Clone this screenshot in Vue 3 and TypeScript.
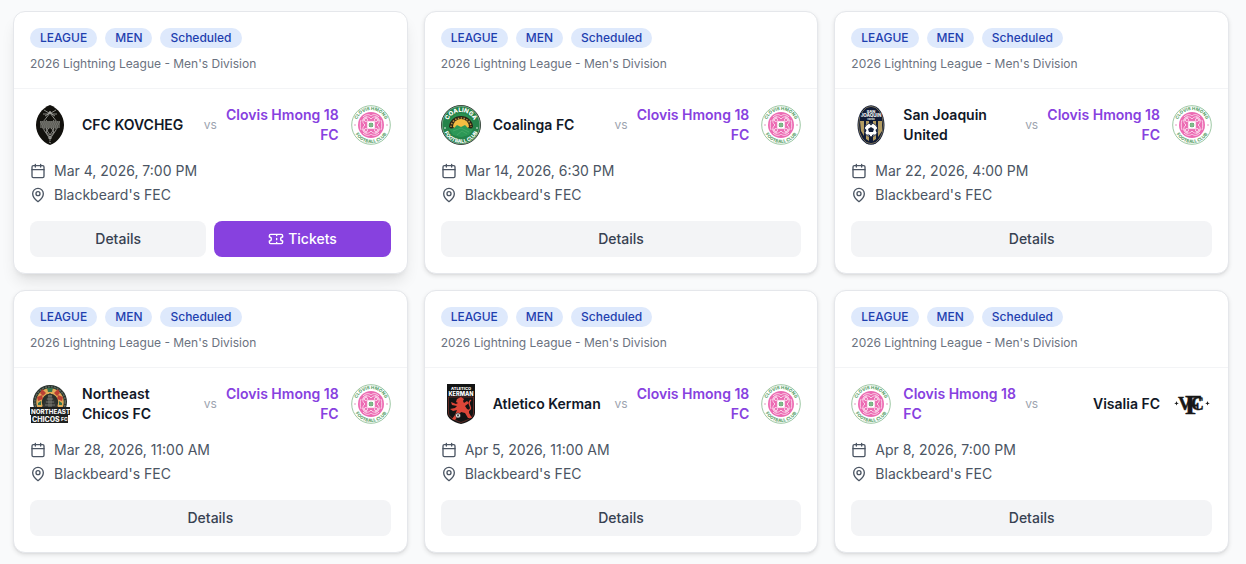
<script setup lang="ts">
type Crest = 'kovcheg' | 'clovis' | 'coalinga' | 'sanjoaquin' | 'northeast' | 'kerman' | 'visalia'

interface Team {
  name: string
  crest: Crest
  own?: boolean
}

interface Match {
  id: number
  home: Team
  away: Team
  date: string
  venue: string
  tickets?: boolean
}

const clovis: Team = { name: 'Clovis Hmong 18 FC', crest: 'clovis', own: true }
const venue = "Blackbeard's FEC"
const competition = "2026 Lightning League - Men's Division"
const tags: string[] = ['LEAGUE', 'MEN', 'Scheduled']

const matches: Match[] = [
  { id: 1, home: { name: 'CFC KOVCHEG', crest: 'kovcheg' }, away: clovis, date: 'Mar 4, 2026, 7:00 PM', venue, tickets: true },
  { id: 2, home: { name: 'Coalinga FC', crest: 'coalinga' }, away: clovis, date: 'Mar 14, 2026, 6:30 PM', venue },
  { id: 3, home: { name: 'San Joaquin United', crest: 'sanjoaquin' }, away: clovis, date: 'Mar 22, 2026, 4:00 PM', venue },
  { id: 4, home: { name: 'Northeast Chicos FC', crest: 'northeast' }, away: clovis, date: 'Mar 28, 2026, 11:00 AM', venue },
  { id: 5, home: { name: 'Atletico Kerman', crest: 'kerman' }, away: clovis, date: 'Apr 5, 2026, 11:00 AM', venue },
  { id: 6, home: clovis, away: { name: 'Visalia FC', crest: 'visalia' }, date: 'Apr 8, 2026, 7:00 PM', venue },
]
</script>

<template>
  <svg class="sprite" aria-hidden="true">
    <defs>
      <path id="arc-top" d="M5 20a15 15 0 0 1 30 0" />
      <path id="arc-top-inner" d="M6 21a14 14 0 0 1 28 0" />
      <path id="arc-bottom" d="M2 20a18 18 0 0 0 36 0" />
    </defs>

    <symbol id="crest-kovcheg" viewBox="0 0 40 40">
      <path d="M20 0C28 3 34 11 34 20S28 37 20 40C12 37 6 29 6 20S12 3 20 0Z" fill="#12110d" />
      <g fill="none" stroke="#a9a9a4" stroke-width=".8">
        <path d="M14 5l5 3 1-2 1 2 5-3M13 9h5l2-2 2 2h5M15 11l5-3 5 3" />
        <path d="M20 8l-7 9 1 8 6 9 6-9 1-8Z" />
        <path d="M16 15l8 12-4 5-4-5 8-12M16 24l4-5 4 5-4 6Z" />
        <path d="M20 31v5M18 33h4M19 37l2 1" />
      </g>
      <path d="M10 16h20v7H10z" fill="#55554f" />
      <path d="M10 17h20M11 19h18M12 21h16M12 23h16" stroke="#b4b4ae" stroke-width=".6" stroke-dasharray="1.4 .7" />
    </symbol>

    <symbol id="crest-clovis" viewBox="0 0 40 40">
      <circle cx="20" cy="20" r="19.3" fill="#fff" stroke="#83b98c" stroke-width=".8" />
      <circle cx="20" cy="20" r="13" fill="#ec6cb3" />
      <g fill="none" stroke="#fbdcee" stroke-width=".9">
        <path d="M12 16c0-4 5-6 8-2 3-4 8-2 8 2M12 24c0 4 5 6 8 2 3 4 8 2 8-2" />
        <path d="M16 12c-4 0-6 5-2 8-4 3-2 8 2 8M24 12c4 0 6 5 2 8 4 3 2 8-2 8" />
        <circle cx="15" cy="15" r="1.600" /><circle cx="25" cy="15" r="1.600" />
        <circle cx="15" cy="25" r="1.600" /><circle cx="25" cy="25" r="1.600" />
        <path d="M12 12c3-3 6-3 8-1 2-2 5-2 8 1M12 28c3 3 6 3 8 1 2 2 5 2 8-1M10 15c-1 3-1 7 0 10M30 15c1 3 1 7 0 10" />
      </g>
      <rect x="16" y="16" width="8" height="8" fill="#fff" stroke="#ed8fc4" stroke-width=".6" />
      <rect x="18" y="18" width="4" height="4" fill="#6cae7a" />
      <path d="M20 17v6M17 20h6" stroke="#9dc9a5" stroke-width=".6" />
      <circle cx="4" cy="20" r=".8" fill="#e58bbd" /><circle cx="36" cy="20" r=".8" fill="#e58bbd" />
      <g class="lettering" fill="#63a670" font-size="4" text-anchor="middle">
        <text font-size="4.500"><textPath href="#arc-top" startOffset="50%">CLOVIS HMONG</textPath></text>
        <text font-size="4.500"><textPath href="#arc-bottom" startOffset="50%">FOOTBALL CLUB</textPath></text>
      </g>
    </symbol>

    <symbol id="crest-coalinga" viewBox="0 0 40 40">
      <circle cx="20" cy="20" r="19.5" fill="#25834a" stroke="#323c34" />
      <circle cx="20" cy="20" r="18.8" fill="none" stroke="#dce6dc" stroke-width=".4" />
      <circle cx="20" cy="20" r="11.8" fill="#2a9251" />
      <path d="M8 22a12 11 0 1 1 24 0l-3 3-4-4H15l-4 4Z" fill="#292416" />
      <path d="M10 22a10 9 0 0 1 20 0" fill="none" stroke="#bd913f" stroke-width="1.500" stroke-dasharray="1.500 1.400" />
      <path d="M12 22a8 8 0 0 1 16 0l-3 2H15Z" fill="#f5bd42" />
      <path d="M8 24l5-1 3-3 4 2 4-2 3 3 5 1-4 6-8 2-8-2Z" fill="#2c9856" />
      <path d="M12 26l8-3 8 4M16 30l5-4 5 3" fill="none" stroke="#47aa68" stroke-width=".8" />
      <circle cx="4" cy="23" r=".8" fill="#fff" /><circle cx="36" cy="23" r=".8" fill="#fff" />
      <g class="lettering" fill="#fff" text-anchor="middle">
        <text font-size="6"><textPath href="#arc-top-inner" startOffset="50%">COALINGA</textPath></text>
        <text font-size="5"><textPath href="#arc-bottom" startOffset="50%">FOOTBALL CLUB</textPath></text>
      </g>
    </symbol>

    <symbol id="crest-sanjoaquin" viewBox="0 0 40 40">
      <ellipse cx="20" cy="20" rx="13.5" ry="19.8" fill="#101b36" />
      <ellipse cx="20" cy="20" rx="12.4" ry="18.7" fill="none" stroke="#9b8b60" stroke-width=".7" />
      <path d="M9 16h4v15l-3-5ZM15 16h3v20l-3-2ZM22 16h3v18l-3 2ZM27 16h4v10l-4 6Z" fill="#b39c62" />
      <path d="M9 8h22v8H9z" fill="#101b36" />
      <g class="lettering" fill="#f1f1ee" text-anchor="middle">
        <text x="20" y="7.500" font-size="4">SAN</text>
        <text x="20" y="12" font-size="4.500">JOAQUIN</text>
        <text x="20" y="15" font-size="2">UNITED</text>
      </g>
      <circle cx="20" cy="25" r="6.8" fill="#fff" stroke="#101b36" stroke-width=".8" />
      <path d="M20 22l3 2-1 3h-4l-1-3ZM18 18.5h4l-2 2ZM13.5 23l2 2-1 3-1-2ZM26.500 23l-2 2 1 3 1-2ZM16 29l3 1v2ZM24 29l-3 1v2Z" fill="#152039" />
    </symbol>

    <symbol id="crest-northeast" viewBox="0 0 40 40">
      <circle cx="20" cy="18" r="17" fill="#29302b" />
      <circle cx="20" cy="18" r="15.2" fill="none" stroke="#59695d" stroke-width="1.600" stroke-dasharray="2 1" />
      <circle cx="20" cy="18" r="11" fill="none" stroke="#e3ac58" stroke-width="5.500" />
      <path d="M7 13l5-2 1 4-5 2ZM12 5l4 4-3 3-3-3ZM28 5l-4 4 3 3 3-3ZM33 13l-5-2-1 4 5 2Z" fill="#bb4034" />
      <path d="M17 4h6l-1 4h-4ZM8 19l3-2v4H8ZM32 19l-3-2v4h3Z" fill="#34744e" />
      <path d="M20 9l2 2 2 4 4 8H12l4-8 2-4Z" fill="#343633" />
      <path d="M18 12h4M17 15h6M16 18h8M15 21h10M19 11v12M21 11v12" stroke="#85867d" stroke-width=".8" />
      <path d="M0 23h40v8h-2v8H1v-8H0Z" fill="#1e201f" />
      <g class="lettering" fill="#f5f5f3">
        <text x="1" y="30" font-size="6.200">NORTHEAST</text>
        <text x="2" y="38" font-size="7">CHICOS</text>
        <text x="31" y="37" font-size="5">FC</text>
      </g>
    </symbol>

    <symbol id="crest-kerman" viewBox="0 0 40 40">
      <path d="M6 0h28v29c0 5-6 9-14 11C12 38 6 34 6 29Z" fill="#121313" />
      <path d="M7.500 13h25v16c0 4-5 7-12.500 9.500C13 36 7.500 33 7.500 29Z" fill="none" stroke="#81332d" stroke-width=".7" />
      <g class="lettering" fill="#fff" text-anchor="middle">
        <text x="20" y="5.500" font-size="4">ATLETICO</text>
        <text x="20" y="11.500" font-size="5.600">KERMAN</text>
      </g>
      <path d="M16 15l4-2 3 2-1 2 1 2 3-2 2 2-4 3 2 3 2 1 0 3 3 5h-4l-3-5-4-1-3 4-3 4-3-1 3-4 2-5-4 1-3-2 5-1 2-2-5-1-1-3 5 2 2-1-2-1Z" fill="#dc4638" />
      <path d="M26 27q5-1 3-5t1-6" fill="none" stroke="#dc4638" stroke-width="1.300" />
      <circle cx="17" cy="31.500" r="2.500" fill="#e8e8e6" stroke="#181818" stroke-width=".6" />
      <path d="M17 30l1 1-.5 1.500h-1L16 31Z" fill="#333" />
    </symbol>

    <symbol id="crest-visalia" viewBox="0 0 40 40">
      <g class="monogram" fill="#171717" stroke="#171717" stroke-width=".4">
        <text x="6" y="26" font-size="19">V</text>
        <text x="19" y="26" font-size="18">C</text>
        <text x="13" y="30" font-size="28">F</text>
      </g>
      <path d="M4.500 17l.6 1.700 1.700.6-1.700.6-.6 1.700-.6-1.700-1.700-.6 1.700-.6ZM35.500 17l.6 1.700 1.700.6-1.700.6-.6 1.700-.6-1.700-1.700-.6 1.700-.6Z" fill="#171717" />
    </symbol>
  </svg>

  <main class="schedule">
    <article v-for="match in matches" :key="match.id" class="card" :class="{ raised: match.tickets }">
      <header class="card-head">
        <div class="tags">
          <span v-for="tag in tags" :key="tag" class="tag">{{ tag }}</span>
        </div>
        <p class="competition">{{ competition }}</p>
      </header>

      <div class="card-body">
        <div class="teams">
          <div class="team">
            <svg class="crest" role="img" :aria-label="match.home.name"><use :href="`#crest-${match.home.crest}`" /></svg>
            <span class="name" :class="{ own: match.home.own }">{{ match.home.name }}</span>
          </div>
          <span class="versus">vs</span>
          <div class="team away">
            <span class="name" :class="{ own: match.away.own }">{{ match.away.name }}</span>
            <svg class="crest" role="img" :aria-label="match.away.name"><use :href="`#crest-${match.away.crest}`" /></svg>
          </div>
        </div>

        <div class="facts">
          <div class="fact">
            <svg class="icon" viewBox="0 0 24 24" aria-hidden="true">
              <rect x="3" y="4" width="18" height="18" rx="2" />
              <path d="M16 2v4M8 2v4M3 10h18" />
            </svg>
            <span>{{ match.date }}</span>
          </div>
          <div class="fact">
            <svg class="icon" viewBox="0 0 24 24" aria-hidden="true">
              <path d="M20 10c0 6-8 12-8 12s-8-6-8-12a8 8 0 0 1 16 0Z" />
              <circle cx="12" cy="10" r="3" />
            </svg>
            <span>{{ match.venue }}</span>
          </div>
        </div>

        <div class="actions">
          <button type="button" class="button">Details</button>
          <button v-if="match.tickets" type="button" class="button primary">
            <svg class="icon" viewBox="0 0 24 24" aria-hidden="true">
              <path d="M2 9a3 3 0 0 1 0 6v2a2 2 0 0 0 2 2h16a2 2 0 0 0 2-2v-2a3 3 0 0 1 0-6V7a2 2 0 0 0-2-2H4a2 2 0 0 0-2 2ZM13 5v2M13 17v2M13 11v2" />
            </svg>
            Tickets
          </button>
        </div>
      </div>
    </article>
  </main>
</template>

<style>
body {
  background: #f9fafb;
}
</style>

<style scoped>
.sprite {
  display: none;
}
.lettering {
  font-family: Inter, sans-serif;
  font-weight: 800;
}
.monogram {
  font-family: "Liberation Serif", serif;
  font-weight: 700;
}
.schedule {
  display: grid;
  grid-template-columns: repeat(3, minmax(0, 1fr));
  gap: 16px;
  padding: 11px 17px 11px 13px;
  font-family: Inter, sans-serif;
  font-size: 14px;
  line-height: 20px;
  color: #4b5563;
}
.card {
  background: #fff;
  border: 1px solid #e5e7eb;
  border-radius: 12px;
  box-shadow: 0 2px 4px rgba(0, 0, 0, 0.1), 0 1px 2px -1px rgba(0, 0, 0, 0.1);
}
.card.raised {
  box-shadow: 0 10px 15px -3px rgba(0, 0, 0, 0.1), 0 4px 6px -4px rgba(0, 0, 0, 0.1);
}
.card-head {
  padding: 16px;
  border-bottom: 1px solid #f3f4f6;
}
.tags {
  display: flex;
  gap: 8px;
}
.tag {
  padding: 2px 10px;
  border-radius: 10px;
  background: #dee9fc;
  color: #1e40af;
  font-size: 12px;
  font-weight: 500;
  line-height: 16px;
}
.competition {
  margin: 8px 0 0;
  font-size: 12px;
  line-height: 16px;
  color: #6b7280;
}
.card-body {
  padding: 16px;
}
.teams {
  display: flex;
  align-items: center;
  gap: 8px;
}
.team {
  flex: 1;
  min-width: 0;
  display: flex;
  align-items: center;
  gap: 12px;
}
.away {
  justify-content: flex-end;
  text-align: right;
}
.crest {
  flex: none;
  width: 40px;
  height: 40px;
}
.name {
  font-weight: 600;
  color: #111827;
}
.name.own {
  color: #8741df;
}
.versus {
  font-size: 12px;
  line-height: 16px;
  color: #9ca3af;
}
.facts {
  display: grid;
  gap: 4px;
  margin: 16px 0;
}
.fact {
  display: flex;
  align-items: center;
  gap: 8px;
}
.icon {
  flex: none;
  width: 16px;
  height: 16px;
  fill: none;
  stroke: currentColor;
  stroke-width: 2;
  stroke-linecap: round;
  stroke-linejoin: round;
}
.actions {
  display: flex;
  gap: 8px;
}
.button {
  flex: 1;
  display: flex;
  align-items: center;
  justify-content: center;
  gap: 4px;
  padding: 8px 12px;
  border: 0;
  border-radius: 8px;
  background: #f3f4f6;
  color: #374151;
  font: inherit;
  font-weight: 500;
  cursor: pointer;
}
.button.primary {
  background: #8741df;
  color: #fff;
}
</style>
